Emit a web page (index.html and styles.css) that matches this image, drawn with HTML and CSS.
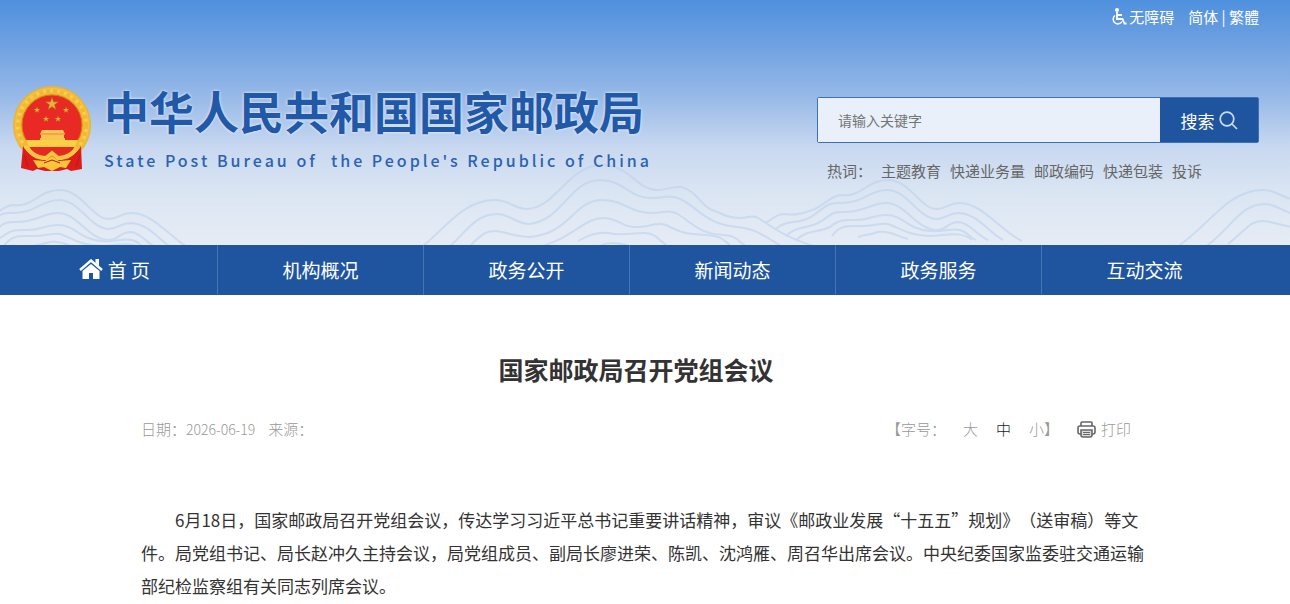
FILE: index.html
```html
<!DOCTYPE html>
<html lang="zh-CN">
<head>
  <meta charset="UTF-8">
  <meta name="viewport" content="width=device-width, initial-scale=1.0">
  <title>国家邮政局召开党组会议</title>
  <link rel="stylesheet" href="styles.css">
</head>
<body>
  <header class="header">
    <svg class="hills" viewBox="0 0 1290 245" preserveAspectRatio="xMidYMax slice" aria-hidden="true">
      <defs>
        <g id="hillSmall">
          <path d="M765 223C773 220 775 214 784 214C796 216 804 213 815 209C828 202 830 197 840 195C862 198 866 180 888 180C910 180 920 209 937 209C946 209 948 203 960 203C982 203 1002 232 1022 241"/>
          <path d="M776 229C784 221 794 223 804 220C818 216 824 202 838 203C864 204 868 190 887 190C908 190 918 219 937 219C946 219 948 213 959 213C978 214 988 232 1003 240"/>
          <path d="M786 236C796 226 806 229 818 223C830 217 830 211 844 212C866 212 870 203 886 203C906 203 916 230 937 230C946 230 948 222 959 222C970 223 976 235 988 240"/>
          <path d="M796 240C808 229 818 233 830 227C840 219 844 220 856 220C870 220 872 215 886 215C904 215 906 229 930 231C944 232 950 228 960 230C968 232 970 238 976 240"/>
          <path d="M832 236C840 224 850 226 862 226C874 226 878 223 888 224C900 228 906 235 930 236C944 236 960 230 972 240"/>
          <path d="M858 237C866 234 870 235 878 232C890 231 894 235 908 239"/>
        </g>
        <g id="hillLarge">
          <path d="M406 259C440 238 458 200 495 200C510 200 514 209 527 209C556 208 568 165 602 165C630 165 636 190 658 190C668 190 670 186 681 187C696 190 702 207 712 210C724 214 726 218 740 218C750 218 752 214 760 219C776 230 790 240 824 249"/>
          <path d="M436 258C464 238 472 214 497 214C510 214 516 224 529 224C562 221 570 180 600 180C624 180 630 199 652 198C664 198 668 195 678 198C694 204 704 222 730 226C750 229 750 226 784 248"/>
          <path d="M460 254C478 240 482 231 494 231C506 231 512 237 530 237C570 234 574 200 602 200C624 200 630 213 652 213C664 213 666 209 676 213C692 222 698 234 724 235C738 236 736 240 748 248"/>
          <path d="M536 248C574 238 584 218 603 218C620 218 620 228 640 227C652 226 656 222 666 225C680 232 684 234 706 235C722 236 724 240 734 249"/>
          <path d="M578 241C590 234 598 232 608 233C622 236 630 233 644 233C656 233 658 240 670 248"/>
          <path d="M598 247C606 242 614 242 630 246"/>
        </g>
      </defs>
      <use href="#hillSmall"/>
      <use href="#hillSmall" x="-828" y="10"/>
      <use href="#hillLarge"/>
      <use href="#hillLarge" x="768" y="-10"/>
    </svg>

    <div class="wrap">
      <div class="topbar">
        <a class="access" href="#">
          <svg width="16" height="17" viewBox="0 0 16 17" aria-hidden="true">
            <circle cx="6" cy="2" r="2" fill="#fff"/>
            <path d="M6 4v7h5.500l2 4.500h2M6 7h5" fill="none" stroke="#fff" stroke-width="1.800"/>
            <path d="M4 7.500A4.700 4.700 0 1 0 11 13.500" fill="none" stroke="#fff" stroke-width="1.500"/>
          </svg>
          <span>无障碍</span>
        </a>
        <div class="lang"><a href="#">简体</a> | <a href="#">繁體</a></div>
      </div>

      <div class="banner">
        <a class="logo" href="#">
          <svg class="emblem" width="80" height="86" viewBox="0 0 80 86" aria-hidden="true">
            <defs>
              <path id="star" d="M0-7L1.600-2.200H6.700L2.600.800 4.100 5.700 0 2.700-4.100 5.700-2.600.800-6.700-2.200H-1.600z"/>
              <radialGradient id="gold">
                <stop offset="0.760" stop-color="#f0a820"/>
                <stop offset="0.880" stop-color="#fbd453"/>
                <stop offset="1" stop-color="#e9ad2b"/>
              </radialGradient>
            </defs>
            <circle cx="40" cy="39" r="39" fill="url(#gold)"/>
            <circle cx="40" cy="39" r="34" fill="none" stroke="#efb838" stroke-width="4" stroke-dasharray="4 3"/>
            <circle cx="40" cy="39" r="30" fill="#e92a24" stroke="#c98213"/>
            <g fill="#e9b03a" stroke="#a75a16" stroke-width="0.500">
              <use href="#star" x="40" y="18"/>
              <use href="#star" transform="translate(25 24) scale(.5)"/>
              <use href="#star" transform="translate(54 24) scale(.5)"/>
              <use href="#star" transform="translate(34 33) scale(.5)"/>
              <use href="#star" transform="translate(46 33) scale(.5)"/>
            </g>
            <path d="M30 44h21l2 4-1 1v3h1v3H28v-3h1v-3l-1-1z" fill="#f8c456"/>
            <path d="M29 48h23" stroke="#e58a2c"/>
            <path d="M14 54h52l-3 7H17z" fill="#fbd045"/>
            <path d="M17 61h46c-4 7-13 10-23 10s-19-3-23-10z" fill="#e52a22"/>
            <path d="M11 60c4 8 12 12 21 13l8-4 8 4c9-1 17-5 21-13l1 23-11 2-4-2-8 2H33l-8-2-4 2-12-3z" fill="#dc1d1c"/>
            <path d="M15 61c4 8 11 11 19 11l6-5 6 5c8 0 15-3 19-11" fill="none" stroke="#f6c544" stroke-width="4"/>
            <path d="M21 74l12 1 7-5 7 5 12-1-5 8-6-1-8 4-8-4-6 1z" fill="#f9c63a"/>
            <path d="M12 69l4 12M68 69l-4 12M32 77l8-3 8 3" stroke="#b51a16" fill="none"/>
          </svg>
          <span class="names">
            <strong>中华人民共和国国家邮政局</strong>
            <span class="en" lang="en">State Post Bureau of &nbsp;the People's Republic of China</span>
          </span>
        </a>

        <div class="search">
          <form class="search-form">
            <input type="text" id="keyword" aria-label="请输入关键字" placeholder="请输入关键字">
            <button type="button">搜索
              <svg width="19" height="19" viewBox="0 0 19 19" fill="none" stroke="#c9dbf3" stroke-width="1.700" aria-hidden="true">
                <circle cx="8" cy="8" r="6.800"/>
                <path d="M13 13l5 5"/>
              </svg>
            </button>
          </form>
          <div class="hot">
            <span class="hot-label">热词：</span>
            <a href="#">主题教育</a>
            <a href="#">快递业务量</a>
            <a href="#">邮政编码</a>
            <a href="#">快递包装</a>
            <a href="#">投诉</a>
          </div>
        </div>
      </div>
    </div>
  </header>

  <nav class="nav">
    <div class="nav-list">
      <a href="#">
        <svg width="24" height="20" viewBox="0 0 24 20" aria-hidden="true">
          <path d="M12 5l8.500 7v8H14v-6h-4v6H3.500v-8z" fill="#fff"/>
          <path d="M1 11L12 1.500 23 11" fill="none" stroke="#fff" stroke-width="2.400"/>
          <path d="M16.500 0h3.500v7l-3.500-3z" fill="#fff"/>
        </svg>
        首 页
      </a>
      <a href="#">机构概况</a>
      <a href="#">政务公开</a>
      <a href="#">新闻动态</a>
      <a href="#">政务服务</a>
      <a href="#">互动交流</a>
    </div>
  </nav>

  <main class="article">
    <h1>国家邮政局召开党组会议</h1>
    <div class="meta">
      <div class="source">
        <span>日期：</span><time datetime="2026-06-19">2026-06-19</time><span class="from">来源：</span>
      </div>
      <div class="tools">
        <span>【字号：</span>
        <button type="button" class="size-large">大</button>
        <button type="button" class="size-mid">中</button>
        <button type="button" class="size-small">小</button><span>】</span>
        <button type="button" class="print">
          <svg width="19" height="17" viewBox="0 0 19 17" fill="none" stroke="#666" stroke-width="1.600" aria-hidden="true">
            <path d="M4 5V2q0-1 1-1h9q1 0 1 1v3"/>
            <path d="M4 13H3q-2 0-2-2V7q0-2 2-2h13q2 0 2 2v4q0 2-2 2h-1"/>
            <path d="M4 9h11v5q0 2-2 2H6q-2 0-2-2z" fill="#ddd"/>
            <path d="M6 11.500h7M6 13.500h7" stroke-width="1"/>
          </svg>
          打印
        </button>
      </div>
    </div>
    <p>6月18日，国家邮政局召开党组会议，传达学习习近平总书记重要讲话精神，审议《邮政业发展“十五五”规划》（送审稿）等文件。局党组书记、局长赵冲久主持会议，局党组成员、副局长廖进荣、陈凯、沈鸿雁、周召华出席会议。中央纪委国家监委驻交通运输部纪检监察组有关同志列席会议。</p>
  </main>
</body>
</html>
```
FILE: styles.css
```css
* {
  box-sizing: border-box;
}
body {
  margin: 0;
  background: #fff;
  color: #333;
  font-family: "Noto Sans CJK SC", sans-serif;
  font-size: 15px;
  text-spacing-trim: space-all;
}
a {
  color: inherit;
  text-decoration: none;
}
button {
  padding: 0;
  border: 0;
  background: none;
  color: inherit;
  font: inherit;
  cursor: pointer;
}

/* header */
.header {
  position: relative;
  overflow: hidden;
  background: linear-gradient(#4f90dd 0%, #72a3e2 20%, #98bae8 40%, #c8d8f0 60%, #dae5f3 78%, #e6ecf5 100%);
}
.hills {
  position: absolute;
  left: 0;
  bottom: 0;
  width: 100%;
  height: 100%;
  fill: none;
  stroke: #bdd2ec;
  stroke-width: 2;
  opacity: 0.6;
}
.wrap {
  position: relative;
  padding: 0 31px 0 12px;
}
.topbar {
  display: flex;
  justify-content: flex-end;
  align-items: center;
  gap: 14px;
  height: 32px;
  color: #fff;
}
.access {
  display: flex;
  align-items: center;
  gap: 2px;
}
.banner {
  display: flex;
  justify-content: space-between;
  align-items: flex-start;
  min-height: 213px;
  padding-top: 54px;
}
.logo {
  display: flex;
  gap: 12px;
}
.names {
  display: flex;
  flex-direction: column;
  color: #2158a8;
}
.names strong {
  font-size: 45px;
  line-height: 50px;
  text-shadow: 0 0 3px #fff;
}
.en {
  margin-top: 12px;
  color: #2c62af;
  font-size: 16px;
  font-weight: 500;
  line-height: 24px;
  letter-spacing: 3px;
}
.search {
  width: 442px;
  padding-top: 11px;
}
.search-form {
  display: flex;
  height: 46px;
  border: 1px solid #3c70b8;
  border-radius: 2px;
}
.search-form input {
  flex: 1;
  min-width: 0;
  padding: 0 20px;
  border: 0;
  background: #e9f0fa;
  font: inherit;
  font-size: 14px;
}
.search-form input::placeholder {
  color: #757575;
}
.search-form button {
  display: flex;
  justify-content: center;
  align-items: center;
  gap: 4px;
  width: 98px;
  background: #1f559f;
  color: #fff;
  font-size: 17px;
}
.hot {
  display: flex;
  gap: 9px;
  padding: 17px 0 0 10px;
  color: #666;
  line-height: 22px;
  white-space: nowrap;
}

/* nav */
.nav {
  padding: 0 43px 0 12px;
  background: #1f559f;
  color: #fff;
}
.nav-list {
  display: flex;
}
.nav-list a {
  display: flex;
  flex: 1;
  justify-content: center;
  align-items: center;
  gap: 5px;
  height: 50px;
  padding-bottom: 2px;
  border-right: 1px solid #4375b5;
  font-size: 19px;
}
.nav-list a:last-child {
  border-right: 0;
}

/* article */
.article {
  padding: 54px 159px 0 141px;
}
h1 {
  margin: 0;
  font-size: 25px;
  line-height: 40px;
  text-align: center;
}
.meta {
  display: flex;
  justify-content: space-between;
  margin-top: 28px;
  color: #999;
  font-weight: 300;
  line-height: 24px;
}
.meta time {
  font-size: 14px;
}
.from {
  margin-left: 13px;
}
.tools {
  display: flex;
}
.size-large {
  margin-left: 17px;
}
.size-mid {
  margin: 0 18px;
  color: #222;
}
.print {
  display: flex;
  align-items: center;
  gap: 5px;
  margin-left: 18px;
}
.article p {
  margin: 62px -14px 0 0;
  font-size: 17px;
  line-height: 33px;
  text-indent: 2em;
}
```
